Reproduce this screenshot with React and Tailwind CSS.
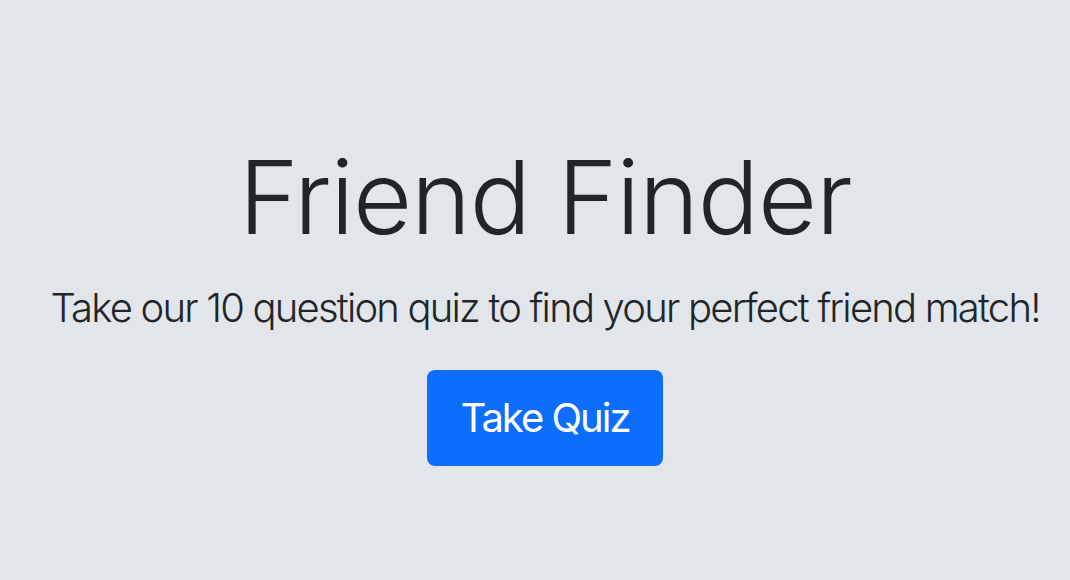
export default function App() {
  return (
    <div
      className="min-h-[580px] w-full bg-[#e2e6ea] text-[#212529]"
      style={{ fontFamily: 'Inter, "Noto Sans", sans-serif' }}
    >
      <div className="flex flex-col items-center pl-[20px] pt-[136px]">
        <h1 className="whitespace-nowrap text-[102px] font-light leading-[1.2] tracking-[-1.2px]">Friend Finder</h1>
        <p className="mt-[20px] whitespace-nowrap text-[40px] font-light leading-[1.5] tracking-[-1.8px]">
          Take our 10 question quiz to find your perfect friend match!
        </p>
        <button className="mt-[32px] h-[96px] w-[236px] rounded-[8px] bg-[#0d6efd] text-[40px] font-normal tracking-[-2px] text-white">
          Take Quiz
        </button>
      </div>
    </div>
  );
}
